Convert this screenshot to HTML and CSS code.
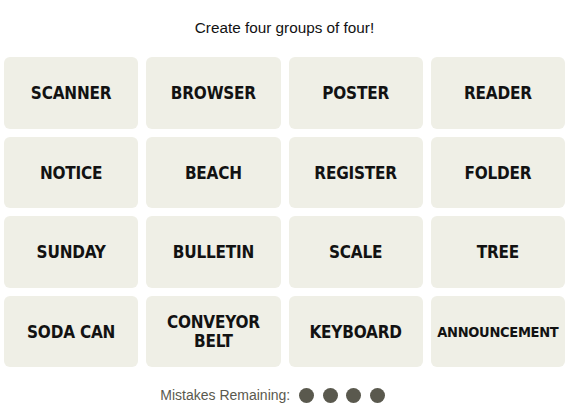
FILE: index.html
```html
<!DOCTYPE html>
<html lang="en">
<head>
<meta charset="utf-8">
<title>Connections</title>
<link rel="stylesheet" href="styles.css">
</head>
<body>
<main class="game">
  <p class="prompt">Create four groups of four!</p>
  <section class="board">
    <button class="tile">SCANNER</button>
    <button class="tile">BROWSER</button>
    <button class="tile">POSTER</button>
    <button class="tile">READER</button>
    <button class="tile">NOTICE</button>
    <button class="tile">BEACH</button>
    <button class="tile">REGISTER</button>
    <button class="tile">FOLDER</button>
    <button class="tile">SUNDAY</button>
    <button class="tile">BULLETIN</button>
    <button class="tile">SCALE</button>
    <button class="tile">TREE</button>
    <button class="tile">SODA CAN</button>
    <button class="tile">CONVEYOR<br>BELT</button>
    <button class="tile">KEYBOARD</button>
    <button class="tile tile-small">ANNOUNCEMENT</button>
  </section>
  <div class="mistakes">
    <span class="mistakes-label">Mistakes Remaining:</span>
    <span class="dots">
      <span class="dot"></span><span class="dot"></span><span class="dot"></span><span class="dot"></span>
    </span>
  </div>
</main>
</body>
</html>
```

FILE: styles.css
```css
* { box-sizing: border-box; }
html, body { margin: 0; padding: 0; background: #ffffff; }
body {
  font-family: "Liberation Sans", Arial, sans-serif;
  color: #000;
}
.game {
  width: 570px;
  padding: 0 5px 0 4px;
}
.prompt {
  margin: 0;
  padding-top: 18px;
  height: 57px;
  text-align: center;
  font-size: 15.3px;
  line-height: 20px;
  color: #121212;
}
.board {
  display: grid;
  grid-template-columns: repeat(4, minmax(0, 1fr));
  grid-auto-rows: 71.5px;
  gap: 8px;
}
.tile {
  border: 0;
  margin: 0;
  padding: 2px 2px 0;
  background: #efefe6;
  border-radius: 6px;
  font-family: "DejaVu Sans Condensed", "DejaVu Sans", sans-serif;
  font-stretch: condensed;
  font-weight: 700;
  font-size: 17px;
  line-height: 19px;
  letter-spacing: -0.2px;
  color: #121212;
  text-align: center;
}
.tile-small { font-size: 14.5px; letter-spacing: -0.3px; }
.mistakes {
  display: flex;
  justify-content: center;
  align-items: center;
  gap: 9px;
  height: 40px;
  padding-top: 16px;
  padding-right: 24px;
  font-size: 14px;
  color: #5a594e;
}
.dots { display: flex; gap: 8.5px; }
.dot {
  width: 15px;
  height: 15px;
  border-radius: 50%;
  background: #5a594e;
}
```
